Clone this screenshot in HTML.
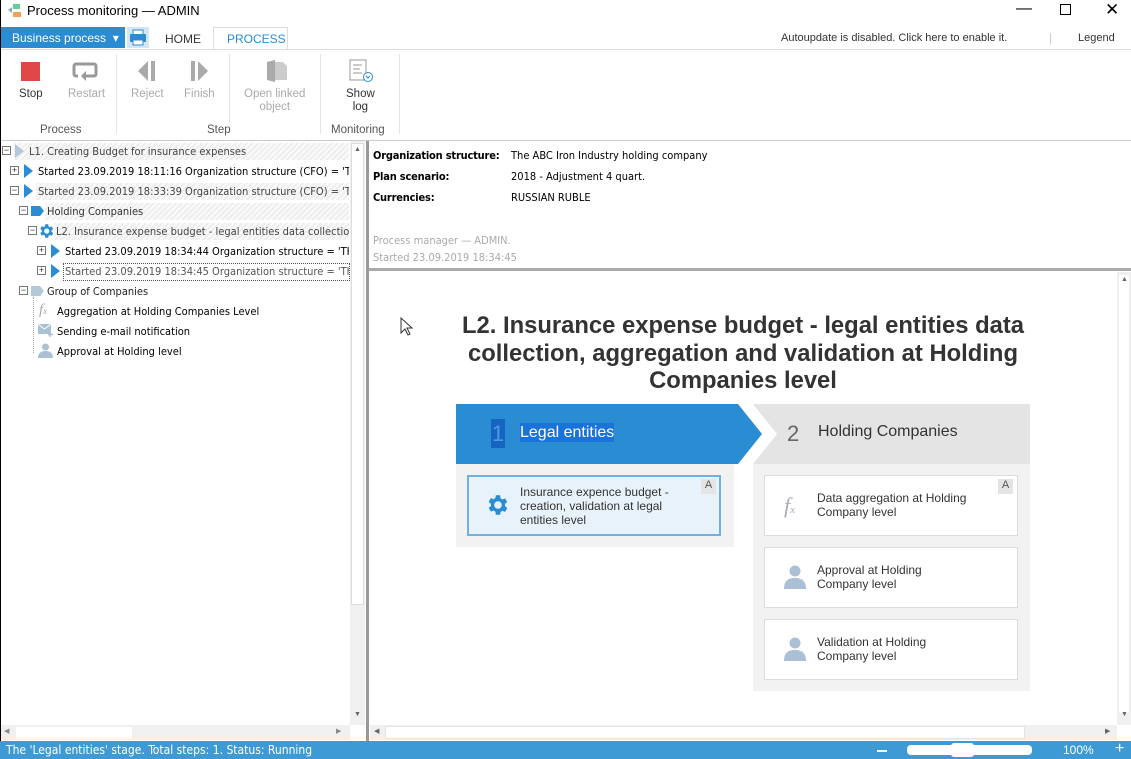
<!DOCTYPE html><html><head><meta charset="utf-8"><style>
*{margin:0;padding:0;box-sizing:border-box}
body{width:1131px;height:759px;position:relative;overflow:hidden;background:#fff;font-family:"Liberation Sans",Tahoma,sans-serif;font-size:12px;color:#000}
.a{position:absolute}
.t{font-family:"DejaVu Sans Condensed","Liberation Sans",sans-serif;font-size:11px;white-space:nowrap}
.hatch{background:repeating-linear-gradient(135deg,#eee 0 2px,#fafafa 2px 4px)}
.pm{position:absolute;width:9px;height:9px;border:1px solid #777;background:#fff;font-size:9px;line-height:7px;text-align:center;color:#333}
.tri{position:absolute;width:0;height:0;border-top:7px solid transparent;border-bottom:7px solid transparent;border-left:9px solid #2a8cd3}
.rb{position:absolute;color:#aaa;font-size:11.5px;text-align:center}
.card{position:absolute;background:#fff;border:1px solid #ddd;font-size:12px;line-height:14px;color:#333}
</style></head><body>
<div class="a" style="left:0;top:0;width:1px;height:759px;background:#000"></div>
<div class="a" style="left:8px;top:4px;width:14px;height:14px"><svg width="14" height="14"><rect x="5" y="0" width="7" height="5" fill="#6c9"/><rect x="5" y="8" width="8" height="5" fill="#f0a060"/><path d="M0 6l4-3v6z" fill="#8ab"/></svg></div>
<div class="a" style="left:27px;top:3px;font-size:13px">Process monitoring — ADMIN</div>
<div class="a" style="left:1016px;top:0;font-size:16px">&#8212;</div>
<div class="a" style="left:1060px;top:4px;width:11px;height:11px;border:1px solid #000"></div>
<div class="a" style="left:1105px;top:0;font-size:17px">✕</div>
<div class="a" style="left:1px;top:27px;width:124px;height:21px;background:#2a8cd3;color:#fff;font-size:12px;padding:4px 0 0 11px">Business process &nbsp;▾</div>
<div class="a" style="left:127px;top:27px;width:22px;height:21px;background:#d4e6f4"><svg width="22" height="21"><rect x="6" y="3" width="10" height="5" fill="#fff" stroke="#2a8cd3"/><rect x="3" y="7" width="16" height="8" rx="1" fill="#2a8cd3"/><rect x="6" y="13" width="10" height="5" fill="#fff" stroke="#2a8cd3"/></svg></div>
<div class="a" style="left:165px;top:32px;font-size:12px;color:#333">HOME</div>
<div class="a" style="left:213px;top:27px;width:75px;height:23px;border:1px solid #ddd;border-bottom:none;background:#fff;color:#2a8cd3;padding:4px 0 0 13px;font-size:12px">PROCESS</div>
<div class="a" style="left:781px;top:32px;font-size:11px;color:#333">Autoupdate is disabled. Click here to enable it.</div>
<div class="a" style="left:1049px;top:31px;color:#ccc">|</div>
<div class="a" style="left:1078px;top:32px;font-size:11px;color:#333">Legend</div>
<div class="a" style="left:1px;top:49px;width:1130px;height:1px;background:#ddd"></div>
<div class="a" style="left:21px;top:62px;width:19px;height:19px;background:#e04848"></div>
<div class="a" style="left:19px;top:88px;font-size:11.5px;color:#333">Stop</div>
<svg class="a" style="left:72px;top:62px" width="28" height="20"><path d="M6 14H4a2 2 0 0 1-2-2V4a2 2 0 0 1 2-2h18a2 2 0 0 1 2 2v8a2 2 0 0 1-2 2H12" stroke="#999" stroke-width="3" fill="none"/><path d="M14 9l-5 5 5 5z" fill="#999"/></svg>
<div class="rb" style="left:68px;top:88px">Restart</div>
<div class="a" style="left:116px;top:54px;width:1px;height:80px;background:#e4e4e4"></div>
<svg class="a" style="left:137px;top:60px" width="20" height="22"><path d="M11 1L1 11l10 10z" fill="#aaa"/><rect x="14" y="1" width="4" height="20" fill="#aaa"/></svg>
<div class="rb" style="left:131px;top:88px">Reject</div>
<svg class="a" style="left:190px;top:60px" width="20" height="22"><rect x="1" y="1" width="4" height="20" fill="#aaa"/><path d="M8 1l10 10-10 10z" fill="#aaa"/></svg>
<div class="rb" style="left:184px;top:88px">Finish</div>
<div class="a" style="left:229px;top:54px;width:1px;height:70px;background:#e4e4e4"></div>
<svg class="a" style="left:266px;top:59px" width="22" height="24"><path d="M1 3l8-2v22l-8-2z" fill="#aaa"/><path d="M9 3h8l4 4v14H9z" fill="#ccc"/></svg>
<div class="rb" style="left:244px;top:88px;line-height:13px">Open linked<br>object</div>
<div class="a" style="left:320px;top:54px;width:1px;height:80px;background:#e4e4e4"></div>
<svg class="a" style="left:349px;top:59px" width="26" height="24"><rect x="1" y="1" width="16" height="20" fill="#fff" stroke="#999"/><path d="M4 6h9M4 10h7M4 14h9" stroke="#999"/><circle cx="19" cy="18" r="4.5" fill="#fff" stroke="#2a8cd3"/><path d="M17 17l2 2 2-2" stroke="#2a8cd3" fill="none"/></svg>
<div class="a" style="left:346px;top:88px;font-size:11.5px;color:#333;text-align:center;line-height:13px">Show<br>log</div>
<div class="a" style="left:399px;top:54px;width:1px;height:80px;background:#e4e4e4"></div>
<div class="a" style="left:40px;top:124px;font-size:11.5px;color:#555">Process</div>
<div class="a" style="left:207px;top:124px;font-size:11.5px;color:#555">Step</div>
<div class="a" style="left:331px;top:124px;font-size:11.5px;color:#555">Monitoring</div>
<div class="a" style="left:1px;top:140px;width:1130px;height:1px;background:#ccc"></div>
<div class="a hatch" style="left:14px;top:143px;width:335px;height:17px"></div>
<div class="pm" style="left:2px;top:146px">−</div>
<div class="a" style="left:15px;top:144px;width:0;height:0;border-top:7px solid transparent;border-bottom:7px solid transparent;border-left:9px solid #b4c8da"></div>
<div class="a t" style="left:29px;top:145px;color:#444">L1. Creating Budget for insurance expenses</div>
<div class="pm" style="left:10px;top:166px">+</div><div class="tri" style="left:24px;top:164px"></div>
<div class="a t" style="left:38px;top:165px;width:311px;overflow:hidden">Started 23.09.2019 18:11:16 Organization structure (CFO) = 'The ABC</div>
<div class="a hatch" style="left:36px;top:183px;width:313px;height:17px"></div>
<div class="pm" style="left:10px;top:186px">−</div><div class="tri" style="left:24px;top:184px"></div>
<div class="a t" style="left:38px;top:185px;width:311px;overflow:hidden;color:#444">Started 23.09.2019 18:33:39 Organization structure (CFO) = 'The ABC</div>
<div class="a hatch" style="left:45px;top:203px;width:304px;height:17px"></div>
<div class="pm" style="left:19px;top:206px">−</div>
<svg class="a" style="left:31px;top:206px" width="14" height="10"><path d="M0 0h9l4 5-4 5H0z" fill="#2a8cd3"/></svg>
<div class="a t" style="left:47px;top:205px;color:#333">Holding Companies</div>
<div class="a hatch" style="left:54px;top:223px;width:295px;height:17px"></div>
<div class="pm" style="left:28px;top:226px">−</div>
<svg class="a" style="left:37px;top:222px" width="18" height="18" viewBox="0 0 24 24"><path fill="#2a8cd3" d="M19.4 13a7.5 7.5 0 0 0 0-2l2.1-1.6-2-3.5-2.5 1a7 7 0 0 0-1.7-1L15 3h-4l-.4 2.7a7 7 0 0 0-1.7 1l-2.5-1-2 3.5L6.5 11a7.5 7.5 0 0 0 0 2l-2.1 1.6 2 3.5 2.5-1a7 7 0 0 0 1.7 1L11 21h4l.4-2.7a7 7 0 0 0 1.7-1l2.5 1 2-3.5zM13 15.5a3.5 3.5 0 1 1 0-7 3.5 3.5 0 0 1 0 7z"/></svg>
<div class="a t" style="left:56px;top:225px;width:293px;overflow:hidden;color:#444">L2. Insurance expense budget - legal entities data collectionu</div>
<div class="pm" style="left:37px;top:246px">+</div><div class="tri" style="left:51px;top:244px"></div>
<div class="a t" style="left:65px;top:245px;width:284px;overflow:hidden">Started 23.09.2019 18:34:44 Organization structure = 'THE ABC</div>
<div class="a" style="left:63px;top:263px;width:287px;height:18px;border:1px dotted #555"></div>
<div class="pm" style="left:37px;top:266px">+</div><div class="tri" style="left:51px;top:264px"></div>
<div class="a t" style="left:65px;top:265px;width:284px;overflow:hidden;color:#555">Started 23.09.2019 18:34:45 Organization structure = 'The ABC</div>
<div class="pm" style="left:19px;top:286px">−</div>
<svg class="a" style="left:31px;top:286px" width="14" height="10"><path d="M0 0h9l4 5-4 5H0z" fill="#b4c8da"/></svg>
<div class="a t" style="left:47px;top:285px;color:#222">Group of Companies</div>
<div class="a" style="left:33px;top:297px;width:1px;height:56px;border-left:1px dotted #aaa"></div>
<div class="a" style="left:39px;top:302px;font-family:'Liberation Serif',serif;font-style:italic;color:#aaa;font-size:15px">f<span style="font-size:9px">x</span></div>
<div class="a t" style="left:57px;top:305px">Aggregation at Holding Companies Level</div>
<svg class="a" style="left:38px;top:324px" width="16" height="13"><rect x="0" y="0" width="13" height="10" fill="#aac0d4"/><path d="M0 0l6.5 5L13 0" stroke="#fff" fill="none"/><path d="M12 8v5M10 10.5h5" stroke="#aac0d4" stroke-width="1.5"/></svg>
<div class="a t" style="left:57px;top:325px">Sending e-mail notification</div>
<svg class="a" style="left:38px;top:343px" width="15" height="15"><circle cx="7.5" cy="4" r="3.5" fill="#aac0d4"/><path d="M0 15c0-5 3-7 7.5-7S15 10 15 15z" fill="#aac0d4"/></svg>
<div class="a t" style="left:57px;top:345px">Approval at Holding level</div>
<div class="a" style="left:350px;top:141px;width:15px;height:584px;background:#f0f0f0"></div>
<div class="a" style="left:351px;top:143px;width:13px;height:462px;background:#fff;border:1px solid #ddd"></div>
<div class="a" style="left:354px;top:146px;font-size:7px;color:#666">▲</div>
<div class="a" style="left:354px;top:711px;font-size:7px;color:#666">▼</div>
<div class="a" style="left:1px;top:725px;width:349px;height:15px;background:#f0f0f0"></div>
<div class="a" style="left:16px;top:727px;width:116px;height:12px;background:#fff"></div>
<div class="a" style="left:4px;top:727px;font-size:7px;color:#888">◀</div>
<div class="a" style="left:336px;top:727px;font-size:7px;color:#888">▶</div>
<div class="a" style="left:366px;top:141px;width:3px;height:600px;background:#999"></div>
<div class="a" style="left:373px;top:145px;font-size:11px;font-family:'DejaVu Sans Condensed',sans-serif;font-weight:bold;line-height:21px;letter-spacing:-0.2px">Organization structure:<br>Plan scenario:<br>Currencies:</div>
<div class="a t" style="left:511px;top:145px;line-height:21px">The ABC Iron Industry holding company<br>2018 - Adjustment 4 quart.<br>RUSSIAN RUBLE</div>
<div class="a t" style="left:373px;top:232px;line-height:17px;color:#aaa">Process manager — ADMIN.<br>Started 23.09.2019 18:34:45</div>
<div class="a" style="left:369px;top:268px;width:762px;height:3px;background:#aaa"></div>
<svg class="a" style="left:400px;top:317px" width="14" height="20"><path d="M1 1v15l4-4 3 6 2-1-3-6h5z" fill="#fff" stroke="#333"/></svg>
<div class="a" style="left:430px;top:312px;width:626px;text-align:center;font-weight:bold;font-size:23.8px;line-height:27.5px;color:#333">L2. Insurance expense budget - legal entities data collection, aggregation and validation at Holding Companies level</div>
<div class="a" style="left:456px;top:464px;width:278px;height:83px;background:#f2f2f2"></div>
<svg class="a" style="left:456px;top:404px" width="580" height="61"><path d="M0 0h282l24 30-24 30H0z" fill="#2a8cd3"/><path d="M297 0h277v60H297l24-30z" fill="#e4e4e4"/></svg>
<div class="a" style="left:491px;top:419px;width:14px;height:29px;background:#1565c0;color:#4b9be0;font-size:22px;text-align:center;line-height:29px">1</div>
<div class="a" style="left:520px;top:423px;background:#1a73d8;color:#fff;font-size:16px;line-height:19px">Legal entities</div>
<div class="a" style="left:787px;top:421px;color:#666;font-size:22px">2</div>
<div class="a" style="left:818px;top:423px;color:#333;font-size:16px">Holding Companies</div>
<div class="a" style="left:753px;top:464px;width:277px;height:227px;background:#f2f2f2"></div>
<div class="card" style="left:467px;top:475px;width:254px;height:61px;background:#e8f2fa;border:2px solid #6fb1e4"></div>
<svg class="a" style="left:485px;top:492px" width="26" height="26" viewBox="0 0 24 24"><path fill="#2a8cd3" d="M19.4 13a7.5 7.5 0 0 0 0-2l2.1-1.6-2-3.5-2.5 1a7 7 0 0 0-1.7-1L15 3h-4l-.4 2.7a7 7 0 0 0-1.7 1l-2.5-1-2 3.5L6.5 11a7.5 7.5 0 0 0 0 2l-2.1 1.6 2 3.5 2.5-1a7 7 0 0 0 1.7 1L11 21h4l.4-2.7a7 7 0 0 0 1.7-1l2.5 1 2-3.5zM13 15.5a3.5 3.5 0 1 1 0-7 3.5 3.5 0 0 1 0 7z" transform="translate(-1 0)"/></svg>
<div class="a" style="left:520px;top:485px;font-size:12px;line-height:14px;color:#333">Insurance expence budget -<br>creation, validation at legal<br>entities level</div>
<div class="a" style="left:701px;top:479px;width:15px;height:15px;background:#e4e4e4;font-size:11px;text-align:center;color:#555">A</div>
<div class="card" style="left:764px;top:475px;width:254px;height:61px"></div>
<div class="a" style="left:784px;top:493px;font-family:'Liberation Serif',serif;font-style:italic;color:#aab;font-size:22px">f<span style="font-size:11px">x</span></div>
<div class="a" style="left:817px;top:491px;line-height:14px;color:#333">Data aggregation at Holding<br>Company level</div>
<div class="a" style="left:998px;top:479px;width:15px;height:15px;background:#e4e4e4;font-size:11px;text-align:center;color:#555">A</div>
<div class="card" style="left:764px;top:547px;width:254px;height:61px"></div>
<svg class="a" style="left:784px;top:565px" width="22" height="24"><circle cx="11" cy="6" r="5.5" fill="#aac0d4"/><path d="M0 24c0-8 4-11 11-11s11 3 11 11z" fill="#aac0d4"/></svg>
<div class="a" style="left:817px;top:563px;line-height:14px;color:#333">Approval at Holding<br>Company level</div>
<div class="card" style="left:764px;top:619px;width:254px;height:61px"></div>
<svg class="a" style="left:784px;top:637px" width="22" height="24"><circle cx="11" cy="6" r="5.5" fill="#aac0d4"/><path d="M0 24c0-8 4-11 11-11s11 3 11 11z" fill="#aac0d4"/></svg>
<div class="a" style="left:817px;top:635px;line-height:14px;color:#333">Validation at Holding<br>Company level</div>
<div class="a" style="left:1117px;top:272px;width:14px;height:453px;background:#f0f0f0"></div>
<div class="a" style="left:1118px;top:274px;width:12px;height:440px;background:#fff;border:1px solid #eee"></div>
<div class="a" style="left:1121px;top:276px;font-size:7px;color:#666">▲</div>
<div class="a" style="left:1121px;top:711px;font-size:7px;color:#666">▼</div>
<div class="a" style="left:370px;top:725px;width:747px;height:15px;background:#f0f0f0"></div>
<div class="a" style="left:385px;top:726px;width:640px;height:13px;background:#fff;border:1px solid #e4e4e4"></div>
<div class="a" style="left:374px;top:727px;font-size:7px;color:#666">◀</div>
<div class="a" style="left:1105px;top:727px;font-size:7px;color:#666">▶</div>
<div class="a" style="left:0;top:741px;width:1131px;height:18px;background:#3d9ad4"></div>
<div class="a" style="left:6px;top:743px;color:#fff;font-size:12px;font-family:'DejaVu Sans Condensed',sans-serif">The 'Legal entities' stage. Total steps: 1. Status: Running</div>
<div class="a" style="left:877px;top:750px;width:10px;height:2px;background:#fff"></div>
<div class="a" style="left:907px;top:745px;width:125px;height:10px;background:#fff;border-radius:4px"></div>
<div class="a" style="left:951px;top:743px;width:23px;height:14px;background:#fff;border-radius:3px"></div>
<div class="a" style="left:1063px;top:743px;color:#fff;font-size:12px">100%</div>
<div class="a" style="left:1115px;top:740px;color:#fff;font-size:16px">+</div>
</body></html>
